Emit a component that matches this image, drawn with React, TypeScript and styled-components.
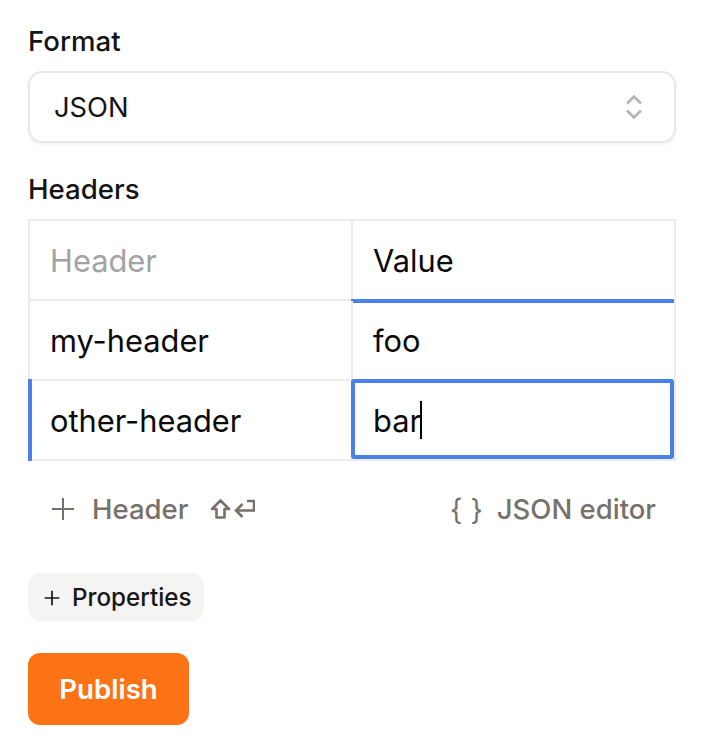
import React from "react";
import styled, { createGlobalStyle } from "styled-components";

const Global = createGlobalStyle`
  html, body { margin: 0; padding: 0; background: #fff; }
  body { font-family: Inter, "Liberation Sans", sans-serif; color: #111; }
`;

const Page = styled.div`
  width: 648px;
  padding: 24px 32px 0 28px;
  display: flex;
  flex-direction: column;
`;

const Label = styled.div`
  font-size: 27.6px;
  line-height: 34px;
  font-weight: 500;
  color: #141414;
`;

const Select = styled.div`
  box-sizing: border-box;
  height: 72px;
  margin-top: 13px;
  padding: 0 32px 0 24px;
  display: flex;
  align-items: center;
  justify-content: space-between;
  border: 2px solid #ebe7e7;
  border-radius: 14px;
  box-shadow: 0 2px 3px rgba(0, 0, 0, 0.05);
  font-size: 27.3px;
  color: #141414;
`;

const HeadersLabel = styled(Label)`
  margin-top: 29px;
`;

const Table = styled.div`
  box-sizing: border-box;
  margin-top: 13px;
  display: grid;
  grid-template-columns: 323px 321px;
  border: 2px solid #ececec;
`;

const Cell = styled.div<{ $muted?: boolean; $last?: boolean; $left?: boolean; $marked?: boolean; $underline?: boolean; $focus?: boolean }>`
  position: relative;
  box-sizing: border-box;
  height: ${(p) => (p.$last ? 78 : 80)}px;
  padding-left: 20px;
  display: flex;
  align-items: center;
  font-size: 30.8px;
  color: ${(p) => (p.$muted ? "#a3a3a3" : "#0a0a0a")};
  border-bottom: ${(p) => (p.$last ? "none" : "2px solid #ececec")};
  border-right: ${(p) => (p.$left ? "2px solid #ececec" : "none")};

  ${(p) =>
    p.$marked &&
    `&::before { content: ""; position: absolute; left: -2px; top: -2px; bottom: -2px; width: 4px; background: #4a80e8; }`}
  ${(p) =>
    p.$underline &&
    `&::after { content: ""; position: absolute; left: -2px; right: 0; bottom: -4px; height: 4px; background: #4a80e8; }`}
  ${(p) =>
    p.$focus &&
    `&::after { content: ""; position: absolute; left: -2px; right: 0; top: -2px; bottom: 0; border: 4px solid #4a80e8; border-radius: 3px; }`}
`;

const Caret = styled.span`
  display: inline-block;
  width: 2px;
  height: 38px;
  margin-left: -1px;
  background: #000;
`;

const Actions = styled.div`
  margin-top: 31px;
  padding: 0 20px 0 23px;
  height: 34px;
  display: flex;
  align-items: center;
  justify-content: space-between;
`;

const Action = styled.div`
  display: flex;
  align-items: center;
  font-size: 27.5px;
  font-weight: 500;
  color: #77716c;
`;

const ActionText = styled.span`
  margin-left: 17px;
`;

const Keys = styled.span`
  display: flex;
  align-items: center;
  gap: 3px;
  margin-left: 22px;
`;

const Brace = styled.span`
  font-size: 29px;
  font-weight: 400;
`;

const JsonText = styled.span`
  margin-left: 14px;
`;

const PropertiesButton = styled.div`
  box-sizing: border-box;
  width: 176px;
  height: 48px;
  margin-top: 47px;
  padding: 1px 0 0 16px;
  display: flex;
  align-items: center;
  gap: 12px;
  border-radius: 12px;
  background: #f4f4f3;
  font-size: 24.2px;
  font-weight: 500;
  color: #171717;
`;

const PublishButton = styled.div`
  box-sizing: border-box;
  width: 161px;
  height: 72px;
  margin-top: 32px;
  display: flex;
  align-items: center;
  justify-content: center;
  border-radius: 12px;
  background: #fc7316;
  font-size: 27.6px;
  font-weight: 560;
  color: #fff;
`;

const Plus = ({ size, color, w }: { size: number; color: string; w: number }) => (
  <svg width={size} height={size} viewBox="0 0 24 24" fill="none" stroke={color} strokeWidth={w}>
    <path d="M12 1v22M1 12h22" />
  </svg>
);

export default function App() {
  return (
    <Page>
      <Global />
      <Label>Format</Label>
      <Select>
        JSON
        <svg width="16" height="24" viewBox="0 0 16 24" fill="none" stroke="#b4b4b4" strokeWidth="2.6">
          <path d="M1 8.5 8 1.5 15 8.5" />
          <path d="M1 15.5 8 22.5 15 15.5" />
        </svg>
      </Select>
      <HeadersLabel>Headers</HeadersLabel>
      <Table>
        <Cell $left $muted>Header</Cell>
        <Cell $underline>Value</Cell>
        <Cell $left>my-header</Cell>
        <Cell>foo</Cell>
        <Cell $left $last $marked>other-header</Cell>
        <Cell $last $focus>
          bar
          <Caret />
        </Cell>
      </Table>
      <Actions>
        <Action>
          <Plus size={24} color="#77716c" w={2} />
          <ActionText>Header</ActionText>
          <Keys>
            <svg width="21" height="20" viewBox="0 0 21 20" fill="none" stroke="#77716c" strokeWidth="2.6">
              <path d="M10.5 1.5 19 10h-4.5v8.5h-8V10H2z" strokeLinejoin="round" />
            </svg>
            <svg width="21" height="20" viewBox="0 0 21 20" fill="none" stroke="#77716c" strokeWidth="2.6">
              <path d="M13 2h7v9.5H2.5M8.5 5l-6.5 6.5 6.5 6.5" />
            </svg>
          </Keys>
        </Action>
        <Action>
          <Brace>{"{ }"}</Brace>
          <JsonText>JSON editor</JsonText>
        </Action>
      </Actions>
      <PropertiesButton>
        <Plus size={16} color="#171717" w={2.6} />
        Properties
      </PropertiesButton>
      <PublishButton>Publish</PublishButton>
    </Page>
  );
}
